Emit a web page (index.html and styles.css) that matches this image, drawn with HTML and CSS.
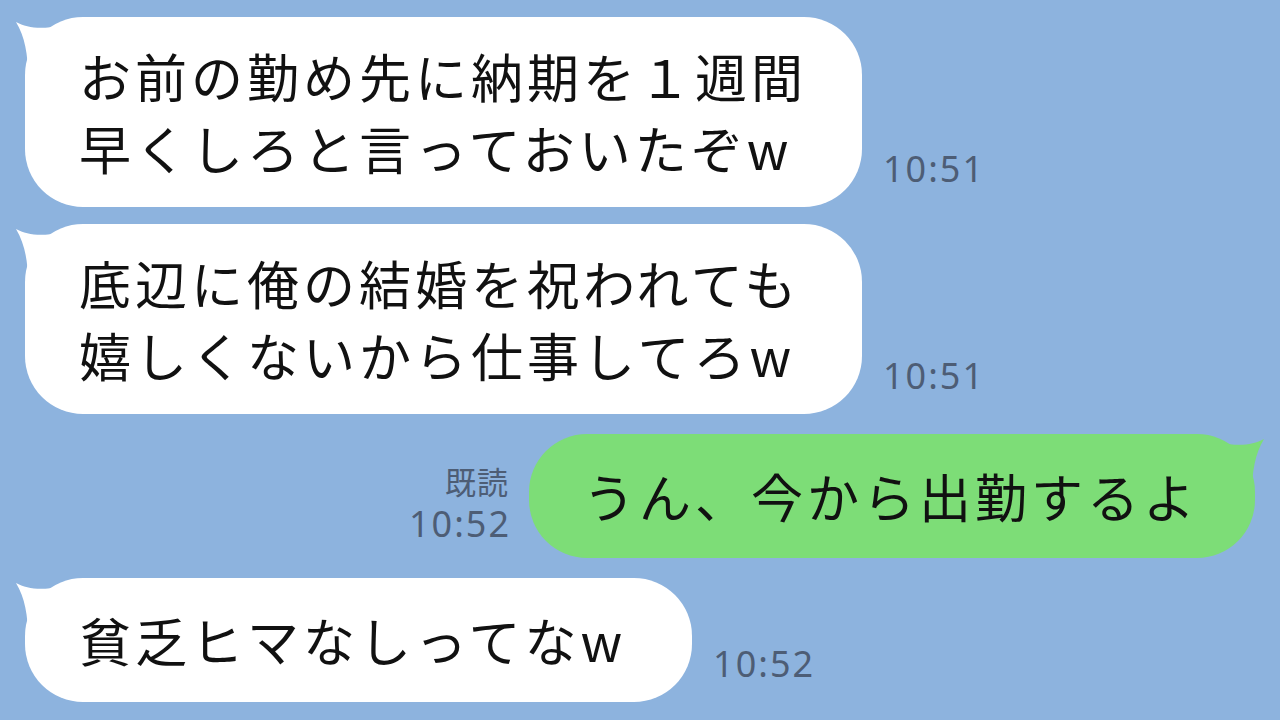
FILE: index.html
```html
<!DOCTYPE html>
<html lang="ja">
<head>
<meta charset="utf-8">
<title>chat</title>
<link rel="stylesheet" href="styles.css">
</head>
<body>
<main class="chat">
  <div class="row row-in row-first">
    <div class="bubble bubble-in bubble-two">
      <svg class="tail tail-in" viewBox="0 0 50 60" width="50" height="60"><path d="M3 5 C 14 11, 30 13, 47 8 L 47 58 L 15 58 C 15 38, 12 20, 3 5 Z"/></svg>
      <p class="text">お前の勤め先に納期を１週間<br>早くしろと言っておいたぞw</p>
    </div>
    <span class="time">10:51</span>
  </div>
  <div class="row row-in row-second">
    <div class="bubble bubble-in bubble-two">
      <svg class="tail tail-in" viewBox="0 0 50 60" width="50" height="60"><path d="M3 5 C 14 11, 30 13, 47 8 L 47 58 L 15 58 C 15 38, 12 20, 3 5 Z"/></svg>
      <p class="text">底辺に俺の結婚を祝われても<br>嬉しくないから仕事してろw</p>
    </div>
    <span class="time">10:51</span>
  </div>
  <div class="row row-out">
    <div class="meta">
      <span class="read">既読</span>
      <span class="time time-out">10:52</span>
    </div>
    <div class="bubble bubble-out">
      <svg class="tail tail-out" viewBox="0 0 50 60" width="50" height="60"><path d="M3 5 C 14 11, 30 13, 47 8 L 47 58 L 15 58 C 15 38, 12 20, 3 5 Z"/></svg>
      <p class="text">うん、今から出勤するよ</p>
    </div>
  </div>
  <div class="row row-in row-last">
    <div class="bubble bubble-in bubble-wide">
      <svg class="tail tail-in" viewBox="0 0 50 60" width="50" height="60"><path d="M3 5 C 14 11, 30 13, 47 8 L 47 58 L 15 58 C 15 38, 12 20, 3 5 Z"/></svg>
      <p class="text">貧乏ヒマなしってなw</p>
    </div>
    <span class="time">10:52</span>
  </div>
</main>
</body>
</html>
```
FILE: styles.css
```css
html, body {
  margin: 0;
  padding: 0;
}
body {
  width: 1280px;
  height: 720px;
  overflow: hidden;
  background: #8db3de;
  font-family: "Noto Sans CJK JP", "Noto Sans", sans-serif;
}
.chat {
  display: flex;
  flex-direction: column;
  padding-top: 17px;
}
.row {
  display: flex;
  align-items: flex-end;
}
.row-in {
  padding-left: 25px;
  gap: 21px;
}
.row-second {
  margin-top: 17px;
}
.row-out {
  margin-top: 20px;
  justify-content: flex-end;
  padding-right: 25px;
  gap: 20px;
}
.row-last {
  margin-top: 20px;
}
.bubble {
  position: relative;
  box-sizing: border-box;
  border-radius: 58px;
  padding: 26px 54px;
}
.bubble-two {
  min-width: 837px;
  padding-top: 23px;
  padding-bottom: 23px;
}
.bubble-in {
  background: #ffffff;
}
.bubble-wide {
  padding-right: 66px;
}
.bubble-out {
  background: #7ddd77;
  padding-left: 54px;
  padding-right: 56px;
}
.text {
  margin: 0;
  font-size: 52px;
  line-height: 72px;
  letter-spacing: 4px;
  color: #111111;
  white-space: nowrap;
}
.tail {
  position: absolute;
  top: 0;
}
.tail-in {
  left: -12px;
  fill: #ffffff;
}
.tail-out {
  right: -12px;
  fill: #7ddd77;
  transform: scaleX(-1);
}
.time {
  font-family: "Noto Sans", sans-serif;
  font-size: 36px;
  line-height: 40px;
  letter-spacing: 2px;
  color: #4d5d75;
  margin-bottom: 18px;
}
.meta {
  display: flex;
  flex-direction: column;
  align-items: flex-end;
  margin-bottom: 14px;
}
.read {
  font-size: 31px;
  line-height: 36px;
  letter-spacing: 1px;
  color: #4d5d75;
  margin-bottom: 5px;
}
.time-out {
  margin-bottom: 0;
  margin-right: -2px;
}
```
